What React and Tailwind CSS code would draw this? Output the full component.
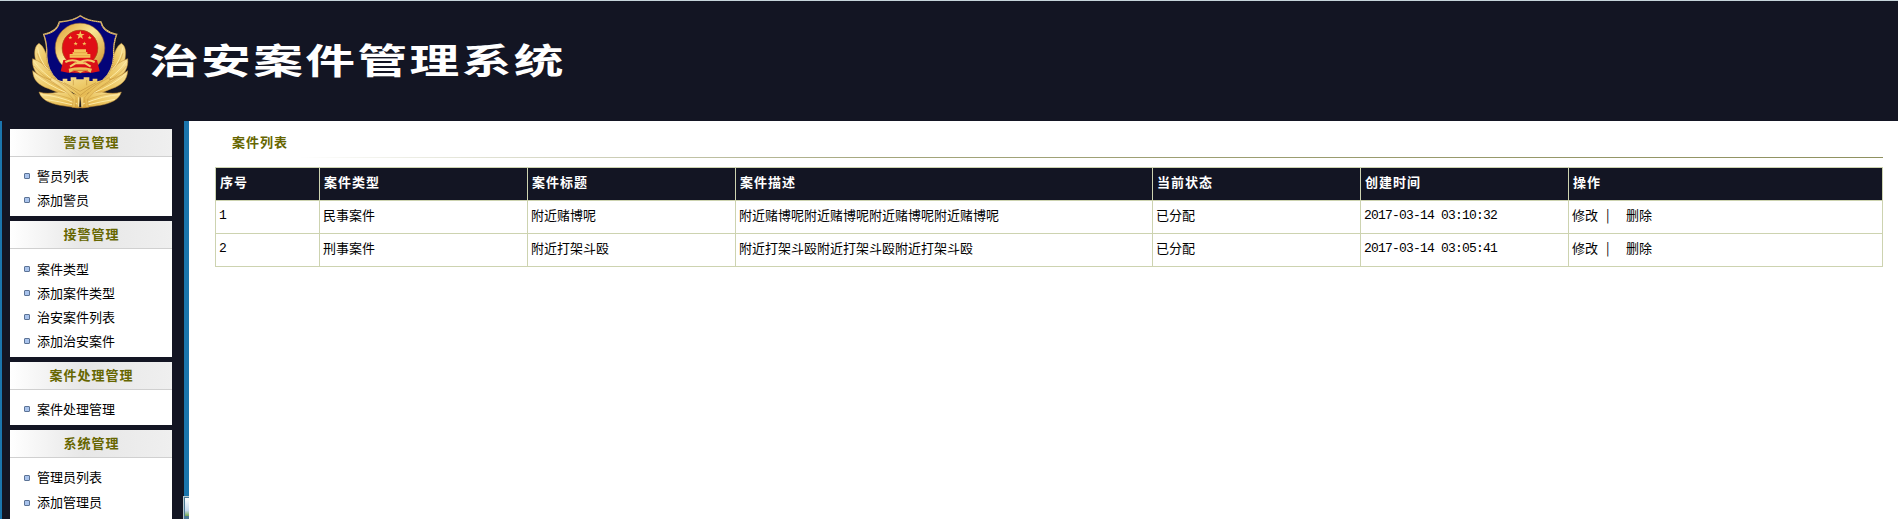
const sans = "font-['Noto_Sans_CJK_SC','Liberation_Sans',sans-serif]";

const menus = [
  { title: '警员管理', items: ['警员列表', '添加警员'], list: 'h-[59px] pt-[7px]', row: 'h-6' },
  { title: '接警管理', items: ['案件类型', '添加案件类型', '治安案件列表', '添加治安案件'], list: 'h-[108px] pt-2', row: 'h-6' },
  { title: '案件处理管理', items: ['案件处理管理'], list: 'h-[35px] pt-[7px]', row: 'h-6' },
  { title: '系统管理', items: ['管理员列表', '添加管理员'], list: 'h-[70px] pt-[7px]', row: 'h-[25px]' },
];

const columns = [
  ['序号', 'w-[104px]'],
  ['案件类型', 'w-[208px]'],
  ['案件标题', 'w-[208px]'],
  ['案件描述', 'w-[417px]'],
  ['当前状态', 'w-[208px]'],
  ['创建时间', 'w-[208px]'],
  ['操作', 'w-[314px]'],
];

const rows = [
  ['1', '民事案件', '附近赌博呢', '附近赌博呢附近赌博呢附近赌博呢附近赌博呢', '已分配', '2017-03-14 03:10:32'],
  ['2', '刑事案件', '附近打架斗殴', '附近打架斗殴附近打架斗殴附近打架斗殴', '已分配', '2017-03-14 03:05:41'],
];

const STAR = 'M0-10 2.4-3.2 9.5-3.1 3.8 1.2 5.9 8.1 0 4-5.9 8.1-3.8 1.2-9.5-3.1-2.4-3.2Z';

function Wing() {
  return (
    <g fill="url(#gold)" stroke="#c08c34" strokeWidth="1.5">
      <path d="M117 130C104 138 102 156 106 178L124 214L156 226L144 180Q134 140 117 130Z" />
      <path d="M98 176C95 200 106 222 128 236L190 270L160 216Q126 186 98 176Z" />
      <path d="M98 212C99 240 116 256 146 266L220 296L200 250Q130 240 98 212Z" />
      <path d="M117 276C124 300 150 310 180 316L236 324L240 288Q214 276 176 276Q140 284 117 276Z" />
      <path d="M122 284Q170 286 232 312M104 222Q140 254 204 280M102 184Q126 218 166 244M113 142Q116 176 144 210M136 298Q176 304 224 316" fill="none" stroke="#fdeaa4" strokeWidth="3" />
      <path d="M128 280Q176 280 230 304M104 214Q140 246 200 270M102 198Q124 226 166 250M112 160Q120 190 146 212" fill="none" stroke="#c08c34" strokeWidth="1.2" />
    </g>
  );
}

function Emblem() {
  return (
    <svg viewBox="90 39 300 291" className="h-[97px] w-[100px] shrink-0">
      <defs>
        <linearGradient id="gold" x1="0" y1="0" x2="1" y2="1">
          <stop offset="0" stopColor="#f9e298" />
          <stop offset="0.5" stopColor="#ecc865" />
          <stop offset="1" stopColor="#dfaa3e" />
        </linearGradient>
        <linearGradient id="ring" x1="0" y1="0" x2="1" y2="1">
          <stop offset="0" stopColor="#e0a63c" />
          <stop offset="0.45" stopColor="#fae695" />
          <stop offset="1" stopColor="#cf9430" />
        </linearGradient>
      </defs>
      <Wing />
      <g transform="translate(481 0) scale(-1 1)"><Wing /></g>
      <path d="M241 47Q222 62 178 66Q172 96 131 103Q142 132 140 168Q142 214 172 240L241 290L309 240Q339 214 341 168Q339 132 350 103Q309 96 303 66Q260 62 241 47Z" fill="#040478" stroke="#e9c878" strokeWidth="4" />
      <path d="M241 47Q222 62 178 66Q172 96 131 103Q142 132 140 168Q142 214 172 240L241 290L309 240Q339 214 341 168Q339 132 350 103Q309 96 303 66Q260 62 241 47Z" fill="none" stroke="#8f642c" strokeWidth="2" strokeDasharray="3 3" />
      <path d="M164 238L188 244V236H202V243H212V232H229V238H251V232H268V243H278V236H292V244L318 238Q282 272 243 292Q200 270 164 238Z" fill="url(#gold)" />
      <path d="M172 242Q204 254 241 286Q280 254 310 242M192 248L240 274L288 248M220 240V256M260 240V256" fill="none" stroke="#b98632" strokeWidth="1.5" />
      <circle cx="240" cy="144" r="64" fill="#e00e16" stroke="url(#ring)" strokeWidth="20" />
      <circle cx="240" cy="144" r="53.5" fill="none" stroke="#a35a18" strokeWidth="2" />
      <circle cx="240" cy="144" r="74.5" fill="none" stroke="#b27a2c" strokeWidth="1.5" />
      <g fill="#f5c45a">
        <path d={STAR} transform="translate(241 106) scale(1.35)" />
        <path d={STAR} transform="translate(211 113) scale(.62)" />
        <path d={STAR} transform="translate(269 113) scale(.62)" />
        <path d={STAR} transform="translate(227 131) scale(.68)" />
        <path d={STAR} transform="translate(253 131) scale(.68)" />
        <path d="M222 148H258V156H262V162H271V173H209V162H218V156H222Z" />
      </g>
      <path d="M220 158H260M211 167H269" stroke="#d9862e" strokeWidth="1.5" />
      <path d="M190 180L212 178Q240 186 268 178L291 180L299 214L276 218H204L182 214Z" fill="#d90f18" />
      <path d="M196 186Q216 176 240 186Q264 176 284 186M210 200L226 190H256L272 200" fill="none" stroke="#f3cc68" strokeWidth="6" />
      <path d="M206 206Q240 198 276 206L272 218Q256 208 241 219Q226 208 208 218Z" fill="#f0c05a" />
      <path d="M218 211H264" stroke="#c8501c" strokeWidth="2" />
      <path d="M154 232Q198 256 228 292L226 323H256L254 292Q284 256 328 232L330 242Q284 270 262 298L266 322H216L220 298Q198 270 152 242Z" fill="url(#gold)" stroke="#c08c34" strokeWidth="1.2" />
      <path d="M236 292V320M246 292V320" stroke="#fdeaa4" strokeWidth="3" />
    </svg>
  );
}

function Menu({ title, items, list, row }) {
  return (
    <section className="w-[162px] shrink-0 bg-white">
      <h2 className="flex h-7 items-center justify-center border-b border-[#d0d0d0] bg-linear-to-r from-white via-[#e7e7e7] via-45% to-[#efefef] pb-0.5 pl-px text-[13px] leading-none font-bold tracking-[1px] text-[#666600]">
        {title}
      </h2>
      <ul className={list}>
        {items.map((item) => (
          <li key={item} className={`flex items-center pl-[14px] ${row}`}>
            <span className="mr-[7px] size-1.5 rounded-[1px] border border-[#5c7395] bg-[#a9c3ec]" />
            <a className="pb-0.5 text-[13px] leading-none text-black">{item}</a>
          </li>
        ))}
      </ul>
    </section>
  );
}

export default function App() {
  return (
    <div className={`flex h-[519px] w-[1898px] flex-col overflow-hidden bg-white text-black ${sans}`}>
      <header className="flex h-[121px] shrink-0 items-start border-t border-[#c6d4da] bg-[#131523] pt-3 pl-[30px]">
        <Emblem />
        <h1 className="mt-[27px] ml-[19px] origin-left scale-x-[1.42] text-[35px] leading-[38px] font-bold tracking-[1.7px] whitespace-nowrap text-white">
          治安案件管理系统
        </h1>
      </header>

      <div className="flex min-h-0 flex-1">
        <aside className="flex w-[184px] shrink-0 flex-col gap-[5px] overflow-hidden border-l-2 border-[#1b75ad] bg-[#131523] pt-2 pl-2">
          {menus.map((menu) => (
            <Menu key={menu.title} {...menu} />
          ))}
        </aside>
        <div className="flex w-[5px] shrink-0 flex-col justify-end bg-[#1b75ad]">
          <div className="-ml-px h-[23px] w-1.5 border-t border-l border-[#b9c8cf] bg-[#4a7794] pt-px pl-px">
            <div className="h-[18px] w-full bg-linear-to-b from-white via-[#c5d8ee] via-70% to-[#76a84c]" />
          </div>
        </div>

        <main className="flex flex-1 flex-col pr-[15px] pl-[26px]">
          <h2 className="flex h-9 items-center pt-[5px] pl-[17px] text-[13px] leading-none font-bold tracking-[1px] text-[#666600]">
            案件列表
          </h2>
          <div className="h-px bg-linear-to-r from-white from-5% via-[#a3a57b] via-40% to-[#8f9160]" />
          <table className="mt-[9px] w-[1668px] table-fixed border-separate border-spacing-0 border-t border-l border-[#cdd3b0] text-[13px] leading-none">
            <thead>
              <tr className="h-[33px] bg-[#131523] text-left tracking-[1px] text-white">
                {columns.map(([name, width]) => (
                  <th key={name} className={`border-r border-b border-[#cdd3b0] pr-[3px] pl-1 pt-0 pb-1.5 font-bold ${width}`}>
                    {name}
                  </th>
                ))}
              </tr>
            </thead>
            <tbody>
              {rows.map((row) => (
                <tr key={row[0]} className="h-[33px]">
                  {row.map((cell, i) => (
                    <td key={i} className="border-r border-b border-[#cdd3b0] px-[3px] pt-0 pb-1.5 whitespace-nowrap">
                      {i === 0 || i === 5 ? (
                        <span className="font-['Liberation_Mono',monospace] tracking-[-0.8px]">{cell}</span>
                      ) : (
                        cell
                      )}
                    </td>
                  ))}
                  <td className="border-r border-b border-[#cdd3b0] px-[3px] pt-0 pb-1.5">
                    <div className="flex items-center">
                      <a>修改</a>
                      <span className="w-7 pl-2">|</span>
                      <a>删除</a>
                    </div>
                  </td>
                </tr>
              ))}
            </tbody>
          </table>
        </main>
      </div>
    </div>
  );
}
